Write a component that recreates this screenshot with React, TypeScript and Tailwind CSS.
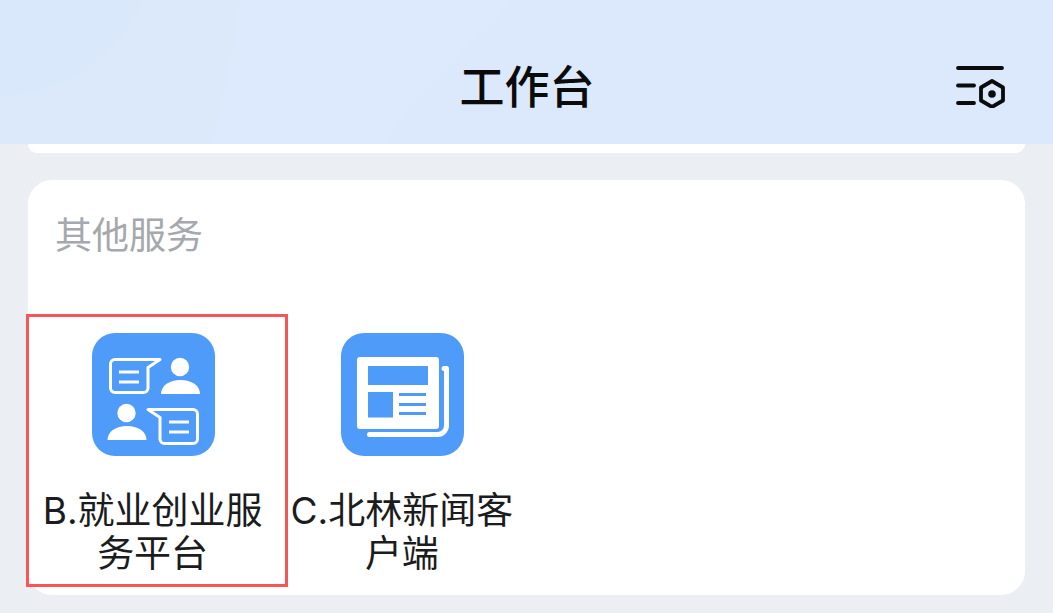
const FONT = "font-['Inter','Noto_Sans_CJK_SC','Noto_Sans',sans-serif]";

function HeaderWash() {
  return (
    <svg className="absolute inset-0" width="1053" height="144" viewBox="0 0 1053 144" fill="none">
      <path d="M0 0H240C235 50 222 100 212 144H0Z" fill="#dbe9fb" />
      <path d="M0 0H143C125 45 75 95 0 96Z" fill="#d9e9fb" />
      <path d="M240 0H510C480 45 400 100 386 144H212C222 100 235 50 240 0Z" fill="#dde9fd" />
    </svg>
  );
}

function SettingsIcon() {
  return (
    <svg width="50" height="42" viewBox="0 0 50 42" fill="none" stroke="#0b0b0c" strokeWidth="3.8" strokeLinecap="round" strokeLinejoin="round">
      <path d="M2 2H46" />
      <path d="M2 19.500H18" />
      <path d="M2 37H18" />
      <path d="M36 15L47 21.500V34.500L36 41L25 34.500V21.500Z" />
      <circle cx="36" cy="28" r="3.800" fill="#0b0b0c" stroke="none" />
    </svg>
  );
}

function EmploymentIcon() {
  return (
    <svg width="123" height="123" viewBox="0 0 123 123" fill="none">
      <rect width="123" height="123" rx="23" fill="#4f9bfa" />
      <path d="M23 26.500H68L56 34.500V55A4.500 4.500 0 0 1 51.500 59.500H23A4.500 4.500 0 0 1 18.500 55V31A4.500 4.500 0 0 1 23 26.500Z" stroke="#fff" strokeWidth="3" strokeLinejoin="round" />
      <path d="M27 39H47M27 49H47" stroke="#fff" strokeWidth="3" />
      <circle cx="88" cy="34" r="9.200" fill="#fff" />
      <path d="M69 61C69 52.500 77.500 47 88.500 47C99.500 47 108 52.500 108 61Z" fill="#fff" />
      <path d="M101 76.500H56L68 84.500V106A4.500 4.500 0 0 0 72.500 110.500H101A4.500 4.500 0 0 0 105.500 106V81A4.500 4.500 0 0 0 101 76.500Z" stroke="#fff" strokeWidth="3" strokeLinejoin="round" />
      <path d="M77 89H97M77 99H97" stroke="#fff" strokeWidth="3" />
      <circle cx="34.500" cy="80" r="9.200" fill="#fff" />
      <path d="M15.500 107C15.500 98.500 24 93 35 93C46 93 54.500 98.500 54.500 107Z" fill="#fff" />
    </svg>
  );
}

function NewsIcon() {
  return (
    <svg width="123" height="123" viewBox="0 0 123 123" fill="none">
      <rect width="123" height="123" rx="23" fill="#4f9bfa" />
      <path d="M103 35.500H105.500V92A9 9 0 0 1 96.500 101.500H28.500" stroke="#fff" strokeWidth="5" strokeLinecap="round" strokeLinejoin="round" />
      <rect x="16" y="24" width="82" height="72" rx="3" fill="#fff" />
      <rect x="27" y="33" width="60" height="19" fill="#4f9bfa" />
      <rect x="27" y="59" width="25" height="25.500" fill="#4f9bfa" />
      <rect x="58" y="60" width="27" height="3" fill="#4f9bfa" />
      <rect x="58" y="70" width="27" height="3" fill="#4f9bfa" />
      <rect x="58" y="79" width="27" height="3" fill="#4f9bfa" />
    </svg>
  );
}

export default function App() {
  return (
    <div className={`h-[613px] w-[1053px] overflow-hidden bg-[#ebeef3] ${FONT}`}>
      <header className="relative flex h-[144px] items-center justify-between bg-[#dce9fc] pl-[48px] pr-[47px] pt-[32px]">
        <HeaderWash />
        <div className="w-[50px]" />
        <h1 className="relative text-[45px] font-medium leading-[56px] text-[#0b0b0c]">工作台</h1>
        <div className="relative flex pb-[2px]">
          <SettingsIcon />
        </div>
      </header>

      <div className="mx-[28px] h-[9px] rounded-b-[24px] bg-white" />

      <section className="mx-[28px] mt-[27px] h-[415px] rounded-[24px] bg-white pt-[32px]">
        <h2 className="pl-[27px] text-[37px] leading-[48px] text-[#a5a8ad]">其他服务</h2>

        <div className="mt-[73px] grid grid-cols-4">
          <div className="relative flex flex-col items-center px-[8px]">
            <div className="ml-[2px] flex">
              <EmploymentIcon />
            </div>
            <p className="mt-[33px] text-center text-[37px] leading-[43px] text-[#1a1c20]">B.就业创业服务平台</p>
            <div className="absolute -top-[19px] left-[-2px] h-[273px] w-[262px] border-[3px] border-[#f85656]" />
          </div>
          <div className="flex flex-col items-center px-[8px]">
            <div className="ml-[2px] flex">
              <NewsIcon />
            </div>
            <p className="mt-[33px] text-center text-[37px] leading-[43px] text-[#1a1c20]">C.北林新闻客户端</p>
          </div>
        </div>
      </section>
    </div>
  );
}
